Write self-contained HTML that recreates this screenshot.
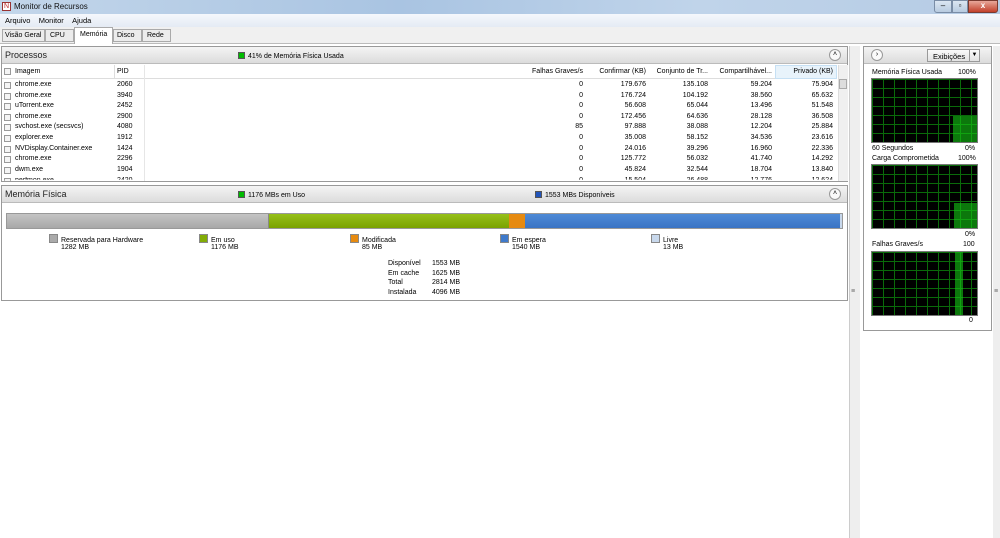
<html><head><style>
*{margin:0;padding:0;box-sizing:border-box}
body{width:1000px;height:538px;overflow:hidden;background:#fff;font-family:"Liberation Sans",sans-serif;font-size:7px;color:#000;position:relative}
.a{position:absolute;white-space:nowrap}
.r{text-align:right}
.cb{position:absolute;width:7px;height:7px;border:1px solid #999;background:#f4f4f4}
.grid{background-color:#000;background-image:linear-gradient(#0a6a0a 1px,transparent 1px),linear-gradient(90deg,#0a6a0a 1px,transparent 1px);background-size:11px 9px;border:1px solid #777}
.hdr{background:linear-gradient(#f4f4f4,#dcdcdc);border-bottom:1px solid #bbb}
.sq{display:inline-block;width:7px;height:7px;border:1px solid #555;vertical-align:-1px;margin-right:3px}
</style></head><body>
<div class="a" style="left:0;top:0;width:1000px;height:14px;background:linear-gradient(90deg,#c3d6ea,#a9c4e2 40%,#c0d4ea 70%,#b5cbe4)"></div>
<div class="a" style="left:2px;top:2px;width:9px;height:9px;background:#fff;border:1px solid #933;color:#b22;font-size:7px;line-height:7px;text-align:center">N</div>
<div class="a" style="left:14px;top:2px;font-size:8px;color:#111">Monitor de Recursos</div>
<div class="a" style="left:934px;top:0;width:18px;height:13px;background:linear-gradient(#dbe6f2,#b8cbe0);border:1px solid #7a8da6;border-radius:0 0 0 3px;font-size:8px;text-align:center">–</div>
<div class="a" style="left:952px;top:0;width:16px;height:13px;background:linear-gradient(#dbe6f2,#b8cbe0);border:1px solid #7a8da6;font-size:8px;text-align:center">▫</div>
<div class="a" style="left:968px;top:0;width:30px;height:13px;background:linear-gradient(#e8a79a,#c2402a);border:1px solid #7a3a30;border-radius:0 0 3px 0;color:#fff;font-size:8px;text-align:center;font-weight:bold">x</div>
<div class="a" style="left:0;top:14px;width:1000px;height:13px;background:linear-gradient(#f5f8fc,#e4ebf4)"></div>
<div class="a" style="left:5px;top:16px;font-size:7.5px">Arquivo&nbsp;&nbsp;&nbsp;&nbsp;Monitor&nbsp;&nbsp;&nbsp;&nbsp;Ajuda</div>
<div class="a" style="left:0;top:27px;width:1000px;height:17px;background:#f0f0f0;border-bottom:1px solid #bbb"></div>
<div class="a" style="left:2px;top:29px;width:43px;height:13px;border:1px solid #aaa;background:#ececec;padding:2px 2px">Visão Geral</div>
<div class="a" style="left:45px;top:29px;width:29px;height:13px;border:1px solid #aaa;background:#ececec;padding:2px 4px">CPU</div>
<div class="a" style="left:74px;top:27px;width:39px;height:17px;border:1px solid #aaa;border-bottom:none;background:#fff;padding:3px 5px">Memória</div>
<div class="a" style="left:113px;top:29px;width:29px;height:13px;border:1px solid #aaa;background:#ececec;padding:2px 3px">Disco</div>
<div class="a" style="left:142px;top:29px;width:29px;height:13px;border:1px solid #aaa;background:#ececec;padding:2px 4px">Rede</div>
<div class="a" style="left:0;top:44px;width:1000px;height:494px;background:#fff"></div>
<div class="a" style="left:849px;top:46px;width:11px;height:492px;background:#eee;border-left:1px solid #ccc"></div>
<div class="a" style="left:851px;top:288px;font-size:7px;color:#666">≡</div>
<div class="a" style="left:993px;top:46px;width:7px;height:492px;background:#eee"></div>
<div class="a" style="left:994px;top:288px;font-size:7px;color:#666">≡</div>
<div class="a" style="left:1px;top:46px;width:847px;height:136px;border:1px solid #999"></div>
<div class="a hdr" style="left:2px;top:47px;width:845px;height:17px"></div>
<div class="a" style="left:5px;top:50px;font-size:9px;color:#222">Processos</div>
<div class="a" style="left:238px;top:52px"><span class="sq" style="background:#0b0"></span>41% de Memória Física Usada</div>
<div class="a" style="left:829px;top:49px;width:12px;height:12px;border:1px solid #999;border-radius:6px;background:#fafafa;font-size:7px;text-align:center;line-height:10px">˄</div>
<div class="a" style="left:2px;top:65px;width:835px;height:14px;background:#fff;border-bottom:1px solid #ddd"></div>
<div class="a" style="left:775px;top:65px;width:62px;height:14px;background:#e8f3fb;border:1px solid #c6e0f4"></div>
<div class="cb" style="left:4px;top:68px"></div>
<div class="a" style="left:15px;top:68px">Imagem</div>
<div class="a" style="left:117px;top:68px">PID</div>
<div class="a" style="left:114px;top:65px;width:1px;height:14px;background:#ddd"></div>
<div class="a" style="left:144px;top:65px;width:1px;height:116px;background:#e6e6e6"></div>
<div class="a r" style="left:500px;top:68px;width:83px">Falhas Graves/s</div>
<div class="a r" style="left:588px;top:68px;width:58px">Confirmar (KB)</div>
<div class="a r" style="left:650px;top:68px;width:58px">Conjunto de Tr...</div>
<div class="a r" style="left:712px;top:68px;width:60px">Compartilhável...</div>
<div class="a r" style="left:775px;top:68px;width:58px">Privado (KB)</div>
<div class="a" style="left:838px;top:65px;width:10px;height:116px;background:#f0f0f0;border-left:1px solid #ddd"></div>
<div class="a" style="left:839px;top:79px;width:8px;height:10px;background:#ddd;border:1px solid #aaa"></div>
<div id="rows"></div>
<div class="a" style="left:1px;top:185px;width:847px;height:116px;border:1px solid #999"></div>
<div class="a hdr" style="left:2px;top:186px;width:845px;height:17px"></div>
<div class="a" style="left:5px;top:189px;font-size:9px;color:#222">Memória Física</div>
<div class="a" style="left:238px;top:191px"><span class="sq" style="background:#0b0"></span>1176 MBs em Uso</div>
<div class="a" style="left:535px;top:191px"><span class="sq" style="background:#2255bb"></span>1553 MBs Disponíveis</div>
<div class="a" style="left:829px;top:188px;width:12px;height:12px;border:1px solid #999;border-radius:6px;background:#fafafa;font-size:7px;text-align:center;line-height:10px">˄</div>
<div class="a" style="left:6px;top:213px;width:837px;height:16px;border:1px solid #999;display:flex">
<div style="width:262px;background:linear-gradient(#c4c4c4,#a8a8a8);border-right:1px solid #888"></div>
<div style="width:240px;background:linear-gradient(#96c01a,#7aa200)"></div>
<div style="width:16px;background:#e68a10"></div>
<div style="width:315px;background:linear-gradient(#4e8ad6,#3a74c4)"></div>
<div style="flex:1;background:#c8d8ec"></div></div>
<div class="a" style="left:49px;top:234px"><span class="sq" style="background:#aaa;border-color:#888;width:9px;height:9px"></span>Reservada para Hardware<br><span style="margin-left:12px">1282 MB</span></div>
<div class="a" style="left:199px;top:234px"><span class="sq" style="background:#82ac06;border-color:#888;width:9px;height:9px"></span>Em uso<br><span style="margin-left:12px">1176 MB</span></div>
<div class="a" style="left:350px;top:234px"><span class="sq" style="background:#e68a10;border-color:#888;width:9px;height:9px"></span>Modificada<br><span style="margin-left:12px">85 MB</span></div>
<div class="a" style="left:500px;top:234px"><span class="sq" style="background:#3f7acb;border-color:#888;width:9px;height:9px"></span>Em espera<br><span style="margin-left:12px">1540 MB</span></div>
<div class="a" style="left:651px;top:234px"><span class="sq" style="background:#c8d8ec;border-color:#888;width:9px;height:9px"></span>Livre<br><span style="margin-left:12px">13 MB</span></div>
<div class="a" style="left:388px;top:259px;line-height:9.7px">Disponível<br>Em cache<br>Total<br>Instalada</div>
<div class="a" style="left:432px;top:259px;line-height:9.7px">1553 MB<br>1625 MB<br>2814 MB<br>4096 MB</div>
<div class="a" style="left:863px;top:46px;width:129px;height:285px;border:1px solid #999"></div>
<div class="a hdr" style="left:864px;top:47px;width:127px;height:17px"></div>
<div class="a" style="left:871px;top:49px;width:12px;height:12px;border:1px solid #999;border-radius:6px;background:#fafafa;text-align:center;line-height:10px">›</div>
<div class="a" style="left:927px;top:49px;width:53px;height:13px;border:1px solid #999;background:linear-gradient(#fafafa,#e2e2e2);padding:2px 0 0 5px;font-size:7.5px">Exibições</div>
<div class="a" style="left:969px;top:49px;width:11px;height:13px;border:1px solid #999;font-size:6px;text-align:center;line-height:11px">▼</div>
<div class="a" style="left:872px;top:69px">Memória Física Usada</div><div class="a" style="left:958px;top:69px">100%</div>
<div class="a grid" style="left:871px;top:78px;width:107px;height:65px"></div>
<div class="a" style="left:953px;top:116px;width:24px;height:26px;background:rgba(20,200,20,.6)"></div>
<div class="a" style="left:872px;top:145px">60 Segundos</div><div class="a" style="left:965px;top:145px">0%</div>
<div class="a" style="left:872px;top:155px">Carga Comprometida</div><div class="a" style="left:958px;top:155px">100%</div>
<div class="a grid" style="left:871px;top:164px;width:107px;height:65px"></div>
<div class="a" style="left:954px;top:203px;width:23px;height:25px;background:rgba(20,200,20,.6)"></div>
<div class="a" style="left:965px;top:231px">0%</div>
<div class="a" style="left:872px;top:241px">Falhas Graves/s</div><div class="a" style="left:963px;top:241px">100</div>
<div class="a grid" style="left:871px;top:251px;width:107px;height:65px"></div>
<div class="a" style="left:955px;top:252px;width:8px;height:63px;background:rgba(20,200,20,.6)"></div>
<div class="a" style="left:969px;top:317px">0</div>
<script>
var d=[["chrome.exe",2060,0,"179.676","135.108","59.204","75.904"],["chrome.exe",3940,0,"176.724","104.192","38.560","65.632"],["uTorrent.exe",2452,0,"56.608","65.044","13.496","51.548"],["chrome.exe",2900,0,"172.456","64.636","28.128","36.508"],["svchost.exe (secsvcs)",4080,85,"97.888","38.088","12.204","25.884"],["explorer.exe",1912,0,"35.008","58.152","34.536","23.616"],["NVDisplay.Container.exe",1424,0,"24.016","39.296","16.960","22.336"],["chrome.exe",2296,0,"125.772","56.032","41.740","14.292"],["dwm.exe",1904,0,"45.824","32.544","18.704","13.840"],["perfmon.exe",2420,0,"15.504","26.488","12.776","12.624"]];
var h="";d.forEach(function(r,i){var t=81+i*10.6;if(i==9)t=177;var c=i==9?"clip-path:inset(0 0 60% 0);":"";
h+='<div class="cb" style="left:4px;top:'+(t+1)+'px;'+c+'"></div><div class="a" style="left:15px;top:'+t+'px;'+c+'">'+r[0]+'</div><div class="a" style="left:117px;top:'+t+'px;'+c+'">'+r[1]+'</div>';
var xs=[[500,583],[588,646],[650,708],[712,772],[775,833]];for(var k=0;k<5;k++)h+='<div class="a r" style="left:'+xs[k][0]+'px;width:'+(xs[k][1]-xs[k][0])+'px;top:'+t+'px;'+c+'">'+r[k+2]+'</div>';});
document.getElementById("rows").innerHTML=h;
</script>
</body></html>
